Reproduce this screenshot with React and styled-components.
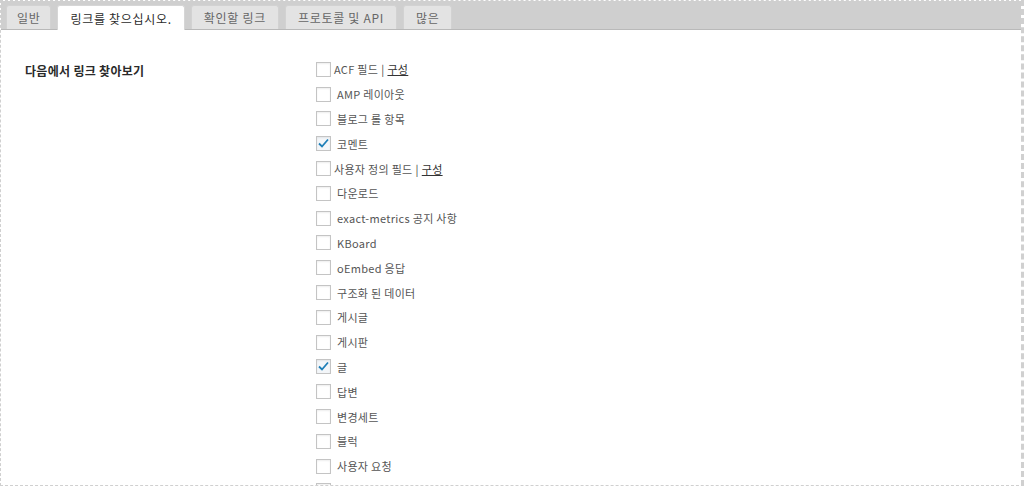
import React from 'react';
import styled, { createGlobalStyle } from 'styled-components';

const GlobalStyle = createGlobalStyle`
  html, body {
    margin: 0;
    padding: 0;
    background: #fff;
  }
  body {
    font-family: "Noto Sans CJK KR", "Noto Sans", sans-serif;
  }
`;

const Frame = styled.div`
  box-sizing: border-box;
  width: 1024px;
  height: 486px;
  overflow: hidden;
  border: 1px dashed #d0d0d0;
  border-right-width: 3px;
  background: #fff;
`;

const TabBar = styled.nav`
  display: flex;
  align-items: flex-end;
  gap: 6px;
  height: 28px;
  padding: 0 5px;
  background: #cfcfcf;
  border-bottom: 1px solid #b9b9b9;
`;

const Tab = styled.div`
  box-sizing: border-box;
  height: ${p => (p.$active ? '25px' : '24px')};
  margin-bottom: ${p => (p.$active ? '-1px' : '0')};
  padding: 0 ${p => p.$pad || 11}px;
  display: flex;
  align-items: center;
  font-size: 12px;
  letter-spacing: 0.7px;
  color: ${p => (p.$active ? '#2b2b2b' : '#666')};
  background: ${p => (p.$active ? '#fff' : '#e3e3e3')};
  border: 1px solid ${p => (p.$active ? '#d6d6d6' : '#d2d2d2')};
  border-bottom: none;
  border-radius: 3px 3px 0 0;
`;

const Body = styled.section`
  display: grid;
  grid-template-columns: 291px 1fr;
  padding: 27px 0 0 24px;
`;

const Heading = styled.h3`
  margin: 5px 0 0;
  font-size: 12px;
  font-weight: 700;
  color: #2a2a2a;
  letter-spacing: 0.3px;
`;

const List = styled.ul`
  list-style: none;
  margin: 0;
  padding: 0;
`;

const Row = styled.li`
  display: flex;
  align-items: center;
  height: 24.8px;
  gap: ${p => (p.$tight ? 3 : 6)}px;
  font-size: 11px;
  color: #555;
  letter-spacing: 0.3px;
`;

const Box = styled.span`
  box-sizing: border-box;
  width: 15px;
  height: 15px;
  border: 1px solid #c4c4c4;
  background: ${p => (p.$checked ? '#f3f6f9' : '#fff')};
  box-shadow: inset 0 1px 2px rgba(0, 0, 0, 0.07);
  display: flex;
  align-items: center;
  justify-content: center;
  flex-shrink: 0;
`;

const Sep = styled.span`
  color: #444;
  margin: 0 3px;
`;

const Link = styled.a`
  color: #333;
  text-decoration: underline;
`;

const Check = () => (
  <svg width="13" height="13" viewBox="0 0 13 13">
    <path d="M2 6.5 L5 9.5 L11 2.5" fill="none" stroke="#1e7fb8" strokeWidth="1.8" />
  </svg>
);

const items = [
  { label: 'ACF 필드', config: true },
  { label: 'AMP 레이아웃' },
  { label: '블로그 롤 항목' },
  { label: '코멘트', checked: true },
  { label: '사용자 정의 필드', config: true },
  { label: '다운로드' },
  { label: 'exact-metrics 공지 사항' },
  { label: 'KBoard' },
  { label: 'oEmbed 응답' },
  { label: '구조화 된 데이터' },
  { label: '게시글' },
  { label: '게시판' },
  { label: '글', checked: true },
  { label: '답변' },
  { label: '변경세트' },
  { label: '블럭' },
  { label: '사용자 요청' },
  { label: '' },
];

const tabs = [
  { label: '일반', pad: 10 },
  { label: '링크를 찾으십시오.', active: true, pad: 12 },
  { label: '확인할 링크', pad: 12 },
  { label: '프로토콜 및 API', pad: 12 },
  { label: '많은', pad: 12 },
];

export default function App() {
  return (
    <>
      <GlobalStyle />
      <Frame>
        <TabBar>
          {tabs.map((t, i) => (
            <Tab key={i} $active={t.active} $pad={t.pad}>{t.label}</Tab>
          ))}
        </TabBar>
        <Body>
          <Heading>다음에서 링크 찾아보기</Heading>
          <List>
            {items.map((it, i) => (
              <Row key={i} $tight={it.config}>
                <Box $checked={it.checked}>{it.checked && <Check />}</Box>
                <span>
                  {it.label}
                  {it.config && (
                    <>
                      <Sep>|</Sep>
                      <Link>구성</Link>
                    </>
                  )}
                </span>
              </Row>
            ))}
          </List>
        </Body>
      </Frame>
    </>
  );
}
